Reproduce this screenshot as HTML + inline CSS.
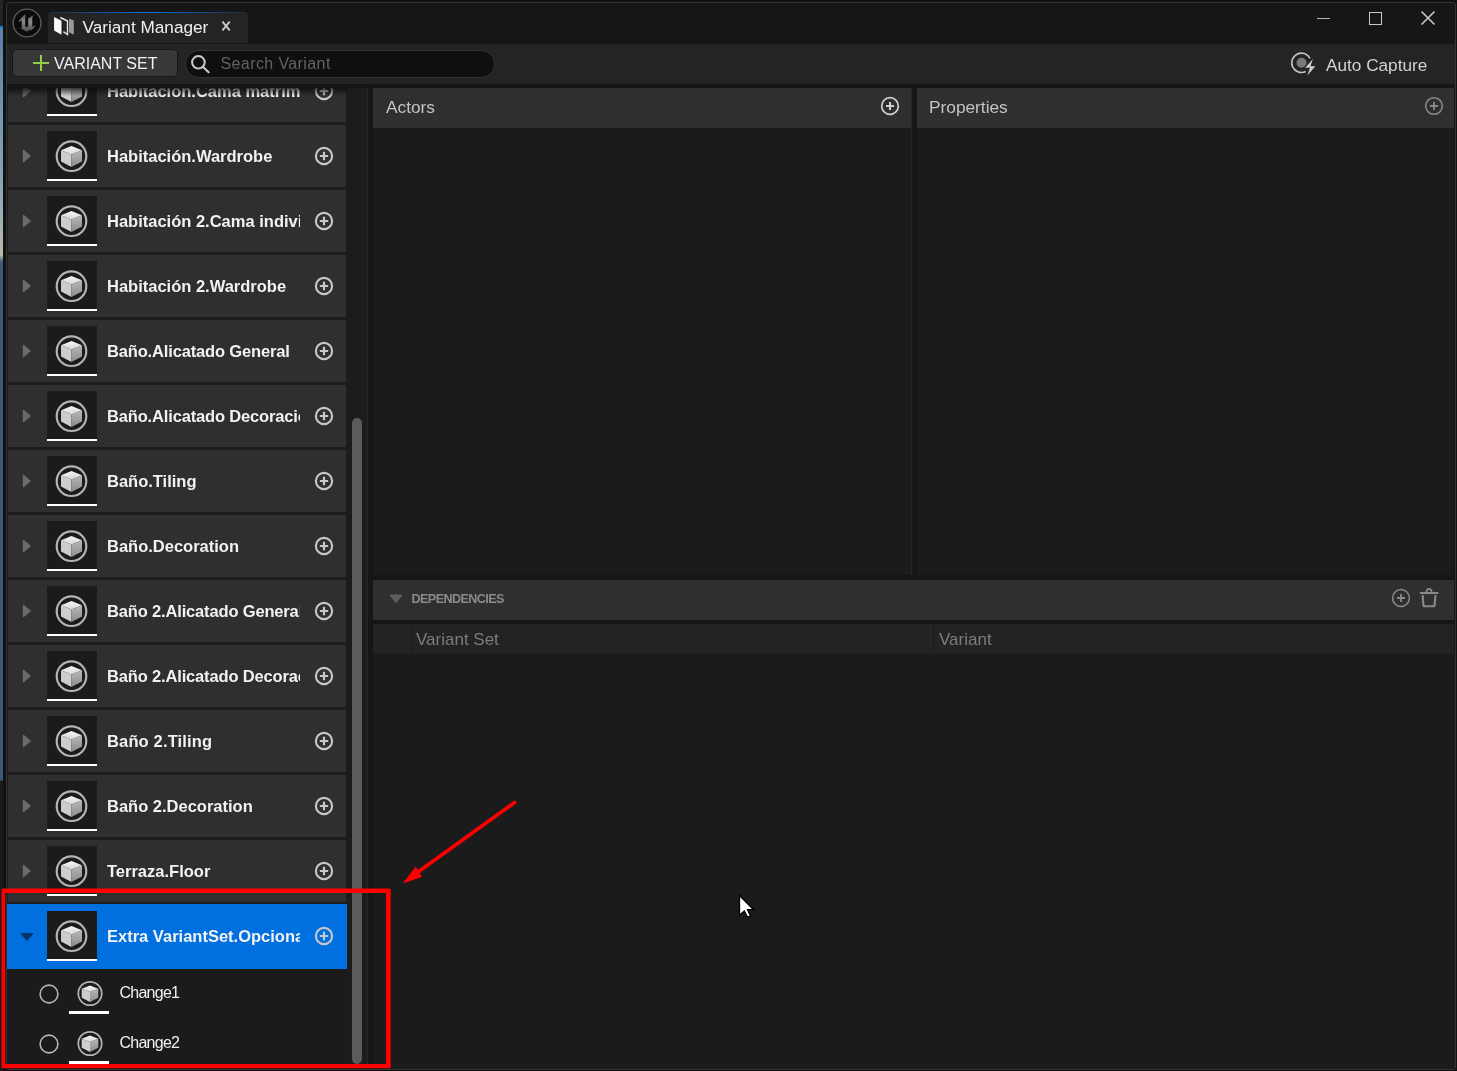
<!DOCTYPE html>
<html><head><meta charset="utf-8"><style>
*{box-sizing:border-box;margin:0;padding:0}
html,body{width:1457px;height:1071px;overflow:hidden;background:#111;font-family:"Liberation Sans",sans-serif}
.abs{position:absolute}
#inner{will-change:transform}
#desk{position:absolute;left:0;top:0;width:3px;height:1071px;background:linear-gradient(#242424 0,#242424 26px,#1a78e0 26px,#1a78e0 28px,#5b80a6 28px,#8aa6b8 190px,#b8bca8 255px,#3e5a7a 262px,#3e5a7a 780px,#1c1c1c 781px)}
#win{position:absolute;left:6px;top:2px;width:1450px;height:1068px;border:1px solid #333;border-radius:3px;background:#161616;overflow:hidden}
#inner{position:absolute;left:-7px;top:-3px;width:1457px;height:1071px}
#tab{position:absolute;left:48px;top:12px;width:200px;height:31px;background:#242424;border-radius:4px 4px 0 0}
#tabline{position:absolute;left:50px;top:12px;width:196px;height:1.2px;background:linear-gradient(90deg,rgba(13,110,224,0.15),#0b6fe0 50%,rgba(13,110,224,0.15))}
#tb{position:absolute;left:7px;top:44px;width:1448px;height:40px;background:#242424}
#btn{position:absolute;left:12px;top:48.5px;width:166px;height:28px;background:#383838;border:1px solid #161616;border-radius:5px}
#search{position:absolute;left:185px;top:50px;width:310px;height:27.5px;background:#0f0f0f;border:1px solid #323232;border-radius:14px}
#list{position:absolute;left:7px;top:88px;width:360px;height:983px;background:#1c1c1c;overflow:hidden}
.row{position:absolute;left:8px;width:338px;height:62px;background:#2f2f2f}
.row .tri{position:absolute;left:14px;top:24px}
.row .tri2{position:absolute;left:11px;top:26.5px}
.row .th{position:absolute;left:39px;top:6px;width:50px;height:48px;background:#1b1b1b}
.row .th svg{position:absolute;left:0;top:0}
.row .ul{position:absolute;left:39px;top:54px;width:50px;height:2.2px;background:#fff}
.row .nm{position:absolute;left:99px;top:20px;width:193px;overflow:hidden;white-space:nowrap;font-weight:700;font-size:16.5px;line-height:22px;color:#f2f2f2}
.row .pl{position:absolute;left:305px;top:20px}
.row.sel{background:transparent}
.sub{position:absolute;left:7px;width:340px;height:50px;background:#1b1b1b}
#scroll{position:absolute;left:352px;top:418px;width:10px;height:646px;background:#5b5b5b;border-radius:5px}
#split1{position:absolute;left:367px;top:88px;width:1px;height:983px;background:#262626}
#right{position:absolute;left:368px;top:84px;width:1087px;height:987px;background:#161616}
.ph{position:absolute;top:88px;height:40px;background:#2f2f2f}
.pb{position:absolute;top:128px;height:447px;background:#1b1b1b}
.htxt{position:absolute;font-size:17.3px;color:#c4c4c4;line-height:20px}
</style></head><body>
<svg width="0" height="0" style="position:absolute"><defs>
<linearGradient id="gTop" x1="0" y1="0" x2="0" y2="1"><stop offset="0" stop-color="#f4f4f4"/><stop offset="1" stop-color="#d8d8d8"/></linearGradient>
<linearGradient id="gR" x1="0" y1="0" x2="0" y2="1"><stop offset="0" stop-color="#b8b8b8"/><stop offset="1" stop-color="#8c8c8c"/></linearGradient>

</defs></svg>
<div id="desk"></div>
<div id="win"><div id="inner">
 <div id="tab"></div><div id="tabline"></div>
 <div id="tb"></div>
 <div id="btn"></div>
 <div id="search"></div>
 <div id="list">
  <div style="position:absolute;left:-7px;top:-88px;width:360px;height:1071px">
  <div class="row" style="top:60px"><svg class="tri" width="12" height="14" viewBox="0 0 12 14"><path d="M1.5 1.5L8 7L1.5 12.5Z" fill="#6b6b6b" stroke="#6b6b6b" stroke-width="1.5" stroke-linejoin="round"/></svg><div class="th"><svg width="50" height="47" viewBox="0 0 50 47"><circle cx="24.5" cy="25.2" r="14.8" fill="none" stroke="#b4b4b4" stroke-width="2.2"/><path d="M24.5 15L35 19.2L24.5 23.4L14 19.2Z" fill="url(#gTop)"/><path d="M14 19.2L24.5 23.4V36L14 30.6Z" fill="#cdcdcd"/><path d="M35 19.2L24.5 23.4V36L35 30.6Z" fill="url(#gR)"/></svg></div><div class="ul"></div><div class="nm" style="letter-spacing:0px">Habitación.Cama matrimonial</div><svg class="pl" width="22" height="22" viewBox="0 0 22 22"><circle cx="11" cy="11" r="8.1" fill="none" stroke="#c8c8c8" stroke-width="2.1"/><path d="M11 6.8V15.2M6.8 11H15.2" stroke="#c8c8c8" stroke-width="2.2"/></svg></div>
<div class="row" style="top:125px"><svg class="tri" width="12" height="14" viewBox="0 0 12 14"><path d="M1.5 1.5L8 7L1.5 12.5Z" fill="#6b6b6b" stroke="#6b6b6b" stroke-width="1.5" stroke-linejoin="round"/></svg><div class="th"><svg width="50" height="47" viewBox="0 0 50 47"><circle cx="24.5" cy="25.2" r="14.8" fill="none" stroke="#b4b4b4" stroke-width="2.2"/><path d="M24.5 15L35 19.2L24.5 23.4L14 19.2Z" fill="url(#gTop)"/><path d="M14 19.2L24.5 23.4V36L14 30.6Z" fill="#cdcdcd"/><path d="M35 19.2L24.5 23.4V36L35 30.6Z" fill="url(#gR)"/></svg></div><div class="ul"></div><div class="nm" style="letter-spacing:0px">Habitación.Wardrobe</div><svg class="pl" width="22" height="22" viewBox="0 0 22 22"><circle cx="11" cy="11" r="8.1" fill="none" stroke="#c8c8c8" stroke-width="2.1"/><path d="M11 6.8V15.2M6.8 11H15.2" stroke="#c8c8c8" stroke-width="2.2"/></svg></div>
<div class="row" style="top:190px"><svg class="tri" width="12" height="14" viewBox="0 0 12 14"><path d="M1.5 1.5L8 7L1.5 12.5Z" fill="#6b6b6b" stroke="#6b6b6b" stroke-width="1.5" stroke-linejoin="round"/></svg><div class="th"><svg width="50" height="47" viewBox="0 0 50 47"><circle cx="24.5" cy="25.2" r="14.8" fill="none" stroke="#b4b4b4" stroke-width="2.2"/><path d="M24.5 15L35 19.2L24.5 23.4L14 19.2Z" fill="url(#gTop)"/><path d="M14 19.2L24.5 23.4V36L14 30.6Z" fill="#cdcdcd"/><path d="M35 19.2L24.5 23.4V36L35 30.6Z" fill="url(#gR)"/></svg></div><div class="ul"></div><div class="nm" style="letter-spacing:0px">Habitación 2.Cama individual</div><svg class="pl" width="22" height="22" viewBox="0 0 22 22"><circle cx="11" cy="11" r="8.1" fill="none" stroke="#c8c8c8" stroke-width="2.1"/><path d="M11 6.8V15.2M6.8 11H15.2" stroke="#c8c8c8" stroke-width="2.2"/></svg></div>
<div class="row" style="top:255px"><svg class="tri" width="12" height="14" viewBox="0 0 12 14"><path d="M1.5 1.5L8 7L1.5 12.5Z" fill="#6b6b6b" stroke="#6b6b6b" stroke-width="1.5" stroke-linejoin="round"/></svg><div class="th"><svg width="50" height="47" viewBox="0 0 50 47"><circle cx="24.5" cy="25.2" r="14.8" fill="none" stroke="#b4b4b4" stroke-width="2.2"/><path d="M24.5 15L35 19.2L24.5 23.4L14 19.2Z" fill="url(#gTop)"/><path d="M14 19.2L24.5 23.4V36L14 30.6Z" fill="#cdcdcd"/><path d="M35 19.2L24.5 23.4V36L35 30.6Z" fill="url(#gR)"/></svg></div><div class="ul"></div><div class="nm" style="letter-spacing:0px">Habitación 2.Wardrobe</div><svg class="pl" width="22" height="22" viewBox="0 0 22 22"><circle cx="11" cy="11" r="8.1" fill="none" stroke="#c8c8c8" stroke-width="2.1"/><path d="M11 6.8V15.2M6.8 11H15.2" stroke="#c8c8c8" stroke-width="2.2"/></svg></div>
<div class="row" style="top:320px"><svg class="tri" width="12" height="14" viewBox="0 0 12 14"><path d="M1.5 1.5L8 7L1.5 12.5Z" fill="#6b6b6b" stroke="#6b6b6b" stroke-width="1.5" stroke-linejoin="round"/></svg><div class="th"><svg width="50" height="47" viewBox="0 0 50 47"><circle cx="24.5" cy="25.2" r="14.8" fill="none" stroke="#b4b4b4" stroke-width="2.2"/><path d="M24.5 15L35 19.2L24.5 23.4L14 19.2Z" fill="url(#gTop)"/><path d="M14 19.2L24.5 23.4V36L14 30.6Z" fill="#cdcdcd"/><path d="M35 19.2L24.5 23.4V36L35 30.6Z" fill="url(#gR)"/></svg></div><div class="ul"></div><div class="nm" style="letter-spacing:-0.16px">Baño.Alicatado General</div><svg class="pl" width="22" height="22" viewBox="0 0 22 22"><circle cx="11" cy="11" r="8.1" fill="none" stroke="#c8c8c8" stroke-width="2.1"/><path d="M11 6.8V15.2M6.8 11H15.2" stroke="#c8c8c8" stroke-width="2.2"/></svg></div>
<div class="row" style="top:385px"><svg class="tri" width="12" height="14" viewBox="0 0 12 14"><path d="M1.5 1.5L8 7L1.5 12.5Z" fill="#6b6b6b" stroke="#6b6b6b" stroke-width="1.5" stroke-linejoin="round"/></svg><div class="th"><svg width="50" height="47" viewBox="0 0 50 47"><circle cx="24.5" cy="25.2" r="14.8" fill="none" stroke="#b4b4b4" stroke-width="2.2"/><path d="M24.5 15L35 19.2L24.5 23.4L14 19.2Z" fill="url(#gTop)"/><path d="M14 19.2L24.5 23.4V36L14 30.6Z" fill="#cdcdcd"/><path d="M35 19.2L24.5 23.4V36L35 30.6Z" fill="url(#gR)"/></svg></div><div class="ul"></div><div class="nm" style="letter-spacing:-0.16px">Baño.Alicatado Decoración</div><svg class="pl" width="22" height="22" viewBox="0 0 22 22"><circle cx="11" cy="11" r="8.1" fill="none" stroke="#c8c8c8" stroke-width="2.1"/><path d="M11 6.8V15.2M6.8 11H15.2" stroke="#c8c8c8" stroke-width="2.2"/></svg></div>
<div class="row" style="top:450px"><svg class="tri" width="12" height="14" viewBox="0 0 12 14"><path d="M1.5 1.5L8 7L1.5 12.5Z" fill="#6b6b6b" stroke="#6b6b6b" stroke-width="1.5" stroke-linejoin="round"/></svg><div class="th"><svg width="50" height="47" viewBox="0 0 50 47"><circle cx="24.5" cy="25.2" r="14.8" fill="none" stroke="#b4b4b4" stroke-width="2.2"/><path d="M24.5 15L35 19.2L24.5 23.4L14 19.2Z" fill="url(#gTop)"/><path d="M14 19.2L24.5 23.4V36L14 30.6Z" fill="#cdcdcd"/><path d="M35 19.2L24.5 23.4V36L35 30.6Z" fill="url(#gR)"/></svg></div><div class="ul"></div><div class="nm" style="letter-spacing:0px">Baño.Tiling</div><svg class="pl" width="22" height="22" viewBox="0 0 22 22"><circle cx="11" cy="11" r="8.1" fill="none" stroke="#c8c8c8" stroke-width="2.1"/><path d="M11 6.8V15.2M6.8 11H15.2" stroke="#c8c8c8" stroke-width="2.2"/></svg></div>
<div class="row" style="top:515px"><svg class="tri" width="12" height="14" viewBox="0 0 12 14"><path d="M1.5 1.5L8 7L1.5 12.5Z" fill="#6b6b6b" stroke="#6b6b6b" stroke-width="1.5" stroke-linejoin="round"/></svg><div class="th"><svg width="50" height="47" viewBox="0 0 50 47"><circle cx="24.5" cy="25.2" r="14.8" fill="none" stroke="#b4b4b4" stroke-width="2.2"/><path d="M24.5 15L35 19.2L24.5 23.4L14 19.2Z" fill="url(#gTop)"/><path d="M14 19.2L24.5 23.4V36L14 30.6Z" fill="#cdcdcd"/><path d="M35 19.2L24.5 23.4V36L35 30.6Z" fill="url(#gR)"/></svg></div><div class="ul"></div><div class="nm" style="letter-spacing:0px">Baño.Decoration</div><svg class="pl" width="22" height="22" viewBox="0 0 22 22"><circle cx="11" cy="11" r="8.1" fill="none" stroke="#c8c8c8" stroke-width="2.1"/><path d="M11 6.8V15.2M6.8 11H15.2" stroke="#c8c8c8" stroke-width="2.2"/></svg></div>
<div class="row" style="top:580px"><svg class="tri" width="12" height="14" viewBox="0 0 12 14"><path d="M1.5 1.5L8 7L1.5 12.5Z" fill="#6b6b6b" stroke="#6b6b6b" stroke-width="1.5" stroke-linejoin="round"/></svg><div class="th"><svg width="50" height="47" viewBox="0 0 50 47"><circle cx="24.5" cy="25.2" r="14.8" fill="none" stroke="#b4b4b4" stroke-width="2.2"/><path d="M24.5 15L35 19.2L24.5 23.4L14 19.2Z" fill="url(#gTop)"/><path d="M14 19.2L24.5 23.4V36L14 30.6Z" fill="#cdcdcd"/><path d="M35 19.2L24.5 23.4V36L35 30.6Z" fill="url(#gR)"/></svg></div><div class="ul"></div><div class="nm" style="letter-spacing:-0.16px">Baño 2.Alicatado General</div><svg class="pl" width="22" height="22" viewBox="0 0 22 22"><circle cx="11" cy="11" r="8.1" fill="none" stroke="#c8c8c8" stroke-width="2.1"/><path d="M11 6.8V15.2M6.8 11H15.2" stroke="#c8c8c8" stroke-width="2.2"/></svg></div>
<div class="row" style="top:645px"><svg class="tri" width="12" height="14" viewBox="0 0 12 14"><path d="M1.5 1.5L8 7L1.5 12.5Z" fill="#6b6b6b" stroke="#6b6b6b" stroke-width="1.5" stroke-linejoin="round"/></svg><div class="th"><svg width="50" height="47" viewBox="0 0 50 47"><circle cx="24.5" cy="25.2" r="14.8" fill="none" stroke="#b4b4b4" stroke-width="2.2"/><path d="M24.5 15L35 19.2L24.5 23.4L14 19.2Z" fill="url(#gTop)"/><path d="M14 19.2L24.5 23.4V36L14 30.6Z" fill="#cdcdcd"/><path d="M35 19.2L24.5 23.4V36L35 30.6Z" fill="url(#gR)"/></svg></div><div class="ul"></div><div class="nm" style="letter-spacing:-0.16px">Baño 2.Alicatado Decoración</div><svg class="pl" width="22" height="22" viewBox="0 0 22 22"><circle cx="11" cy="11" r="8.1" fill="none" stroke="#c8c8c8" stroke-width="2.1"/><path d="M11 6.8V15.2M6.8 11H15.2" stroke="#c8c8c8" stroke-width="2.2"/></svg></div>
<div class="row" style="top:710px"><svg class="tri" width="12" height="14" viewBox="0 0 12 14"><path d="M1.5 1.5L8 7L1.5 12.5Z" fill="#6b6b6b" stroke="#6b6b6b" stroke-width="1.5" stroke-linejoin="round"/></svg><div class="th"><svg width="50" height="47" viewBox="0 0 50 47"><circle cx="24.5" cy="25.2" r="14.8" fill="none" stroke="#b4b4b4" stroke-width="2.2"/><path d="M24.5 15L35 19.2L24.5 23.4L14 19.2Z" fill="url(#gTop)"/><path d="M14 19.2L24.5 23.4V36L14 30.6Z" fill="#cdcdcd"/><path d="M35 19.2L24.5 23.4V36L35 30.6Z" fill="url(#gR)"/></svg></div><div class="ul"></div><div class="nm" style="letter-spacing:0.15px">Baño 2.Tiling</div><svg class="pl" width="22" height="22" viewBox="0 0 22 22"><circle cx="11" cy="11" r="8.1" fill="none" stroke="#c8c8c8" stroke-width="2.1"/><path d="M11 6.8V15.2M6.8 11H15.2" stroke="#c8c8c8" stroke-width="2.2"/></svg></div>
<div class="row" style="top:775px"><svg class="tri" width="12" height="14" viewBox="0 0 12 14"><path d="M1.5 1.5L8 7L1.5 12.5Z" fill="#6b6b6b" stroke="#6b6b6b" stroke-width="1.5" stroke-linejoin="round"/></svg><div class="th"><svg width="50" height="47" viewBox="0 0 50 47"><circle cx="24.5" cy="25.2" r="14.8" fill="none" stroke="#b4b4b4" stroke-width="2.2"/><path d="M24.5 15L35 19.2L24.5 23.4L14 19.2Z" fill="url(#gTop)"/><path d="M14 19.2L24.5 23.4V36L14 30.6Z" fill="#cdcdcd"/><path d="M35 19.2L24.5 23.4V36L35 30.6Z" fill="url(#gR)"/></svg></div><div class="ul"></div><div class="nm" style="letter-spacing:0px">Baño 2.Decoration</div><svg class="pl" width="22" height="22" viewBox="0 0 22 22"><circle cx="11" cy="11" r="8.1" fill="none" stroke="#c8c8c8" stroke-width="2.1"/><path d="M11 6.8V15.2M6.8 11H15.2" stroke="#c8c8c8" stroke-width="2.2"/></svg></div>
<div class="row" style="top:840px"><svg class="tri" width="12" height="14" viewBox="0 0 12 14"><path d="M1.5 1.5L8 7L1.5 12.5Z" fill="#6b6b6b" stroke="#6b6b6b" stroke-width="1.5" stroke-linejoin="round"/></svg><div class="th"><svg width="50" height="47" viewBox="0 0 50 47"><circle cx="24.5" cy="25.2" r="14.8" fill="none" stroke="#b4b4b4" stroke-width="2.2"/><path d="M24.5 15L35 19.2L24.5 23.4L14 19.2Z" fill="url(#gTop)"/><path d="M14 19.2L24.5 23.4V36L14 30.6Z" fill="#cdcdcd"/><path d="M35 19.2L24.5 23.4V36L35 30.6Z" fill="url(#gR)"/></svg></div><div class="ul"></div><div class="nm" style="letter-spacing:0px">Terraza.Floor</div><svg class="pl" width="22" height="22" viewBox="0 0 22 22"><circle cx="11" cy="11" r="8.1" fill="none" stroke="#c8c8c8" stroke-width="2.1"/><path d="M11 6.8V15.2M6.8 11H15.2" stroke="#c8c8c8" stroke-width="2.2"/></svg></div>

  <div class="abs" style="left:7px;top:903.6px;width:340px;height:65px;background:#0070e0"></div>
  <div class="row sel" style="top:905px"><svg class="tri2" width="16" height="10" viewBox="0 0 16 10"><path d="M2.2 1.6H13.8L8 8.2Z" fill="#07346a" stroke="#07346a" stroke-width="1.2" stroke-linejoin="round"/></svg><div class="th"><svg width="50" height="47" viewBox="0 0 50 47"><circle cx="24.5" cy="25.2" r="14.8" fill="none" stroke="#b4b4b4" stroke-width="2.2"/><path d="M24.5 15L35 19.2L24.5 23.4L14 19.2Z" fill="url(#gTop)"/><path d="M14 19.2L24.5 23.4V36L14 30.6Z" fill="#cdcdcd"/><path d="M35 19.2L24.5 23.4V36L35 30.6Z" fill="url(#gR)"/></svg></div><div class="ul"></div><div class="nm" style="letter-spacing:0px">Extra VariantSet.Opcional</div><svg class="pl" width="22" height="22" viewBox="0 0 22 22"><circle cx="11" cy="11" r="8.1" fill="none" stroke="#c8c8c8" stroke-width="2.1"/><path d="M11 6.8V15.2M6.8 11H15.2" stroke="#c8c8c8" stroke-width="2.2"/></svg></div>

  <div class="sub" style="top:969px"></div>
  <div class="sub" style="top:1019px"></div>
  <svg class="abs" style="left:38px;top:983px" width="22" height="22" viewBox="0 0 22 22"><circle cx="11" cy="11" r="8.9" fill="none" stroke="#b4b4b4" stroke-width="1.6"/></svg>
  <svg class="abs" style="left:38px;top:1033px" width="22" height="22" viewBox="0 0 22 22"><circle cx="11" cy="11" r="8.9" fill="none" stroke="#b4b4b4" stroke-width="1.6"/></svg>
  <svg class="abs" style="left:74.6px;top:979px" width="30" height="30" viewBox="0 0 30 30"><g transform="translate(15 14.5) scale(0.79) translate(-24.5 -25.2)"><circle cx="24.5" cy="25.2" r="14.8" fill="none" stroke="#b4b4b4" stroke-width="2.2"/><path d="M24.5 15L35 19.2L24.5 23.4L14 19.2Z" fill="url(#gTop)"/><path d="M14 19.2L24.5 23.4V36L14 30.6Z" fill="#cdcdcd"/><path d="M35 19.2L24.5 23.4V36L35 30.6Z" fill="url(#gR)"/></g></svg>
  <svg class="abs" style="left:74.6px;top:1029px" width="30" height="30" viewBox="0 0 30 30"><g transform="translate(15 14.5) scale(0.79) translate(-24.5 -25.2)"><circle cx="24.5" cy="25.2" r="14.8" fill="none" stroke="#b4b4b4" stroke-width="2.2"/><path d="M24.5 15L35 19.2L24.5 23.4L14 19.2Z" fill="url(#gTop)"/><path d="M14 19.2L24.5 23.4V36L14 30.6Z" fill="#cdcdcd"/><path d="M35 19.2L24.5 23.4V36L35 30.6Z" fill="url(#gR)"/></g></svg>
  <div class="abs" style="left:69px;top:1011px;width:40px;height:3px;background:#fff"></div>
  <div class="abs" style="left:69px;top:1061px;width:40px;height:3px;background:#fff"></div>
  <div class="abs" style="left:119.5px;top:983.8px;font-size:16px;letter-spacing:-0.75px;line-height:18px;color:#f0f0f0">Change1</div>
  <div class="abs" style="left:119.5px;top:1033.8px;font-size:16px;letter-spacing:-0.75px;line-height:18px;color:#f0f0f0">Change2</div>
  </div>
 </div>
 <div id="scroll"></div>
 <div class="abs" style="left:7px;top:84px;width:360px;height:4px;background:#151515"></div>
 <div class="abs" style="left:7px;top:88px;width:340px;height:8px;background:linear-gradient(rgba(10,10,10,0.75),rgba(10,10,10,0))"></div>
 <div id="split1"></div>
 <div id="right"></div>
 <div class="ph" style="left:373px;width:538px"></div>
 <div class="pb" style="left:373px;width:538px"></div>
 <div class="abs" style="left:911px;top:88px;width:1px;height:487px;background:#262626"></div>
 <div class="ph" style="left:917px;width:537px"></div>
 <div class="pb" style="left:917px;width:537px"></div>
 <div class="htxt" style="left:386px;top:97px">Actors</div>
 <div class="htxt" style="left:929px;top:97px">Properties</div>
 <div class="abs" style="left:373px;top:580px;width:1081px;height:40px;background:#2f2f2f"></div>
 <div class="abs" style="left:373px;top:623.5px;width:1081px;height:30.5px;background:#232323"></div>
 <div class="abs" style="left:373px;top:654px;width:1082px;height:417px;background:#1b1b1b"></div>

 <!-- title bar -->
 <svg class="abs" style="left:12px;top:8px" width="30" height="30" viewBox="0 0 30 30">
  <defs><linearGradient id="gU" x1="0" y1="0" x2="0" y2="1"><stop offset="0" stop-color="#5a5a5a"/><stop offset="0.45" stop-color="#8c8c8c"/><stop offset="1" stop-color="#4a4a4a"/></linearGradient></defs>
  <circle cx="15.05" cy="15" r="13.9" fill="#0b0b0b" stroke="#5c5c5c" stroke-width="1.3"/>
  <path d="M6 14.3C8 11.5 11 8 13.7 6L13.2 8.5V18.5L14.6 19.3L16.2 18.5V10.5C18 9.2 20.5 7.8 22.1 7.1L20.3 9.5V19C21.5 18.5 23 17.5 23.8 17.1C22.5 19.5 20.8 21.5 19 22.5C18 22 17 22.2 16 22.8L14.5 23.8C13 22.5 11 21.2 8.1 20.2L9.8 20V12.3C8.5 12.8 7 13.5 6 14.3Z" fill="url(#gU)"/>
 </svg>
 <svg class="abs" style="left:53px;top:16px" width="24" height="24" viewBox="0 0 24 24">
  <path d="M16 2.6L20.8 4.4V18.7L16 16.3Z" fill="#9a9a9a"/>
  <path d="M7.4 1.5L14.5 5V18.7L10.4 15.6" fill="none" stroke="#e6e6e6" stroke-width="1.4" stroke-linejoin="round"/>
  <path d="M1.06 1.04L8.5 4.7V18.7L1.06 14.5Z" fill="#fafafa"/>
 </svg>
 <div class="abs" style="left:82.5px;top:16px;font-size:17.2px;line-height:22px;color:#f0f0f0">Variant Manager</div>
 <svg class="abs" style="left:219px;top:19px" width="14" height="14" viewBox="0 0 14 14"><path d="M3.4 2.6L10.7 11.3M10.7 2.6L3.4 11.3" stroke="#cdcdcd" stroke-width="1.9"/></svg>
 <div class="abs" style="left:1316.5px;top:18px;width:13px;height:1.2px;background:#b4b4b4"></div>
 <div class="abs" style="left:1369px;top:12px;width:13px;height:13px;border:1.5px solid #c8c8c8"></div>
 <svg class="abs" style="left:1420px;top:10px" width="16" height="16" viewBox="0 0 16 16"><path d="M1.5 1.5L14.5 14.5M14.5 1.5L1.5 14.5" stroke="#c8c8c8" stroke-width="1.6"/></svg>
 <!-- toolbar -->
 <svg class="abs" style="left:32px;top:54px" width="18" height="18" viewBox="0 0 18 18"><path d="M9 1V17M1 9H17" stroke="#8ed04c" stroke-width="2"/></svg>
 <div class="abs" style="left:54px;top:54px;font-size:16px;line-height:20px;color:#f2f2f2">VARIANT SET</div>
 <svg class="abs" style="left:189px;top:53px" width="22" height="22" viewBox="0 0 22 22"><circle cx="9.4" cy="9.3" r="6.3" fill="none" stroke="#cccccc" stroke-width="2"/><path d="M13.8 13.8L19.6 19.3" stroke="#cccccc" stroke-width="2" stroke-linecap="round"/></svg>
 <div class="abs" style="left:220.5px;top:54px;font-size:16px;letter-spacing:0.4px;line-height:20px;color:#626262">Search Variant</div>
 <svg class="abs" style="left:1290px;top:51px" width="28" height="28" viewBox="0 0 28 28">
  <path d="M20 7.3A9.7 9.7 0 1 0 15.7 20.5" fill="none" stroke="#c4c4c4" stroke-width="1.6"/>
  <circle cx="11.5" cy="11.8" r="5" fill="#7a7a7a"/>
  <path d="M22.9 8.1L15.2 16.8H20L17.4 24.6L25.3 15.2H20.5Z" fill="#242424" stroke="#242424" stroke-width="2.6" stroke-linejoin="round"/>
  <path d="M22.9 8.1L15.2 16.8H20L17.4 24.6L25.3 15.2H20.5Z" fill="#cfcfcf"/>
 </svg>
 <div class="abs" style="left:1326px;top:55px;font-size:17.2px;line-height:20px;color:#d2d2d2">Auto Capture</div>
 <!-- header pluses -->
 <svg class="abs" style="left:879px;top:95px" width="22" height="22" viewBox="0 0 22 22"><circle cx="11" cy="11" r="8.3" fill="none" stroke="#d0d0d0" stroke-width="1.7"/><path d="M11 7V15M7 11H15" stroke="#d0d0d0" stroke-width="2"/></svg>
 <svg class="abs" style="left:1423px;top:95px" width="22" height="22" viewBox="0 0 22 22"><circle cx="11" cy="11" r="8.3" fill="none" stroke="#8a8a8a" stroke-width="1.5"/><path d="M11 7V15M7 11H15" stroke="#8a8a8a" stroke-width="1.8"/></svg>
 <!-- dependencies -->
 <svg class="abs" style="left:388px;top:593px" width="16" height="12" viewBox="0 0 16 12"><path d="M2 2H14L8 9.5Z" fill="#5c5c5c" stroke="#5c5c5c" stroke-width="1.2" stroke-linejoin="round"/></svg>
 <div class="abs" style="left:411.5px;top:592px;font-size:12.6px;font-weight:700;letter-spacing:-0.58px;line-height:14px;color:#8a8a8a">DEPENDENCIES</div>
 <svg class="abs" style="left:1390px;top:587px" width="22" height="22" viewBox="0 0 22 22"><circle cx="11" cy="11" r="8.4" fill="none" stroke="#8a8a8a" stroke-width="1.5"/><path d="M11 7V15M7 11H15" stroke="#8a8a8a" stroke-width="1.8"/></svg>
 <svg class="abs" style="left:1418px;top:586px" width="22" height="22" viewBox="0 0 22 22"><path d="M2.6 7H19.6" stroke="#8a8a8a" stroke-width="2" stroke-linecap="round"/><path d="M8.4 6C8.6 3.6 9.5 2.9 11 2.9S13.4 3.6 13.6 6" fill="none" stroke="#8a8a8a" stroke-width="1.7"/><path d="M4.6 9.2L5.4 19.3C5.5 20 5.9 20.3 6.5 20.3H15.5C16.1 20.3 16.5 20 16.6 19.3L17.4 9.2" fill="none" stroke="#8a8a8a" stroke-width="2.1"/></svg>
 <div class="abs" style="left:411px;top:623.5px;width:1px;height:30.5px;background:#1b1b1b"></div>
 <div class="abs" style="left:933px;top:623.5px;width:1px;height:30.5px;background:#1b1b1b"></div>
 <div class="abs" style="left:416px;top:629.7px;font-size:17px;line-height:20px;color:#7c7c7c">Variant Set</div>
 <div class="abs" style="left:939px;top:629.7px;font-size:17px;line-height:20px;color:#7c7c7c">Variant</div>

</div></div>
 <!-- annotations -->
 <svg class="abs" style="left:0;top:0" width="1457" height="1071" viewBox="0 0 1457 1071">
  <path fill-rule="evenodd" fill="#ff0000" d="M3 888.5H389.2Q390.7 888.5 390.7 890V1066.8Q390.7 1068.3 389.2 1068.3H3Q1.5 1068.3 1.5 1066.8V890Q1.5 888.5 3 888.5ZM5.2 893V1064.1H386V893Z"/>
  <path d="M514.6 802.5L418 872" stroke="#ff0000" stroke-width="3.6" stroke-linecap="round"/>
  <path d="M402.8 883.5L415.7 866.5L422.2 876.8Z" fill="#ff0000"/>
  <path d="M739.5 895.5V915.2L744.3 911L747.6 917.2L750.5 916L747.5 909.7H753.6Z" fill="#fff" stroke="#000" stroke-width="1.3" stroke-linejoin="miter"/>
 </svg>
</body></html>
